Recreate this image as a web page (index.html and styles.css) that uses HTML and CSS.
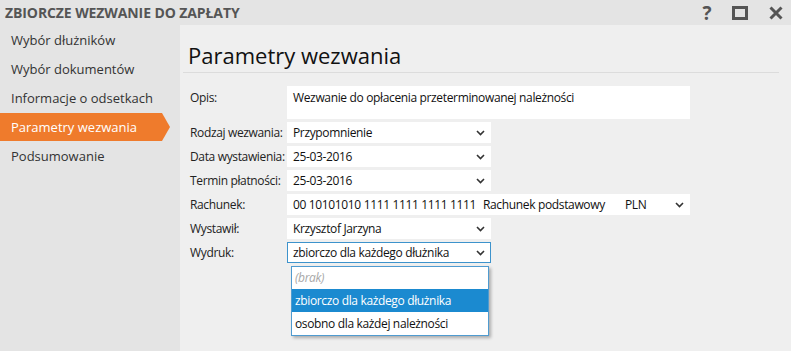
FILE: index.html
```html
<!DOCTYPE html>
<html lang="pl">
<head>
<meta charset="utf-8">
<title>Zbiorcze wezwanie do zapłaty</title>
<link rel="stylesheet" href="styles.css">
</head>
<body>
<div class="window">
  <header class="titlebar">
    <div class="title">ZBIORCZE WEZWANIE DO ZAPŁATY</div>
    <div class="controls">
      <span class="ctl help">?</span>
      <span class="ctl">
        <svg width="16" height="14" viewBox="0 0 16 14"><rect x="1.5" y="1.5" width="13" height="11" fill="none" stroke="#555" stroke-width="3"/></svg>
      </span>
      <span class="ctl">
        <svg width="14" height="14" viewBox="0 0 14 14"><path d="M1.5 1.5 L12.5 12.5 M12.5 1.5 L1.5 12.5" stroke="#555" stroke-width="3"/></svg>
      </span>
    </div>
  </header>
  <div class="main">
    <nav class="sidebar">
      <div class="nav-item">Wybór dłużników</div>
      <div class="nav-item">Wybór dokumentów</div>
      <div class="nav-item">Informacje o odsetkach</div>
      <div class="nav-item active">Parametry wezwania</div>
      <div class="nav-item">Podsumowanie</div>
    </nav>
    <section class="content">
      <h1 class="heading">Parametry wezwania</h1>
      <div class="form">
        <div class="label label-top">Opis:</div>
        <div class="field textarea wide">Wezwanie do opłacenia przeterminowanej należności</div>

        <div class="label">Rodzaj wezwania:</div>
        <div class="field select"><span>Przypomnienie</span><svg class="chev" width="9" height="6" viewBox="0 0 9 6"><path d="M1 1 L4.5 4.5 L8 1" fill="none" stroke="#333" stroke-width="1.6"/></svg></div>

        <div class="label">Data wystawienia:</div>
        <div class="field select"><span>25-03-2016</span><svg class="chev" width="9" height="6" viewBox="0 0 9 6"><path d="M1 1 L4.5 4.5 L8 1" fill="none" stroke="#333" stroke-width="1.6"/></svg></div>

        <div class="label">Termin płatności:</div>
        <div class="field select"><span>25-03-2016</span><svg class="chev" width="9" height="6" viewBox="0 0 9 6"><path d="M1 1 L4.5 4.5 L8 1" fill="none" stroke="#333" stroke-width="1.6"/></svg></div>

        <div class="label">Rachunek:</div>
        <div class="field account wide">
          <span class="acc-no">00 10101010 1111 1111 1111 1111</span>
          <span class="acc-name">Rachunek podstawowy</span>
          <span class="acc-cur">PLN</span>
          <svg class="chev" width="9" height="6" viewBox="0 0 9 6"><path d="M1 1 L4.5 4.5 L8 1" fill="none" stroke="#333" stroke-width="1.6"/></svg>
        </div>

        <div class="label">Wystawił:</div>
        <div class="field select"><span>Krzysztof Jarzyna</span><svg class="chev" width="9" height="6" viewBox="0 0 9 6"><path d="M1 1 L4.5 4.5 L8 1" fill="none" stroke="#333" stroke-width="1.6"/></svg></div>

        <div class="label">Wydruk:</div>
        <div class="field select focused"><span>zbiorczo dla każdego dłużnika</span><svg class="chev" width="9" height="6" viewBox="0 0 9 6"><path d="M1 1 L4.5 4.5 L8 1" fill="none" stroke="#333" stroke-width="1.6"/></svg>
          <ul class="dropdown">
            <li class="opt empty">(brak)</li>
            <li class="opt selected">zbiorczo dla każdego dłużnika</li>
            <li class="opt">osobno dla każdej należności</li>
          </ul>
        </div>
      </div>
    </section>
  </div>
</div>
</body>
</html>
```

FILE: styles.css
```css
* { box-sizing: border-box; }
html, body {
  margin: 0;
  padding: 0;
}
body {
  width: 791px;
  height: 351px;
  overflow: hidden;
  background: #efefef;
  font-family: "Open Sans", "Noto Sans", "DejaVu Sans", sans-serif;
  color: #222;
}
.window {
  width: 791px;
  height: 351px;
  display: flex;
  flex-direction: column;
}
.titlebar {
  height: 25px;
  background: #e4e4e4;
  display: flex;
  align-items: center;
  justify-content: space-between;
  padding-left: 5px;
}
.title {
  font-weight: 700;
  font-size: 14px;
  color: #555;
  letter-spacing: -0.1px;
}
.controls {
  display: flex;
  align-items: center;
  height: 25px;
}
.ctl {
  display: flex;
  align-items: center;
  justify-content: center;
}
.help {
  font-size: 19px;
  font-weight: 700;
  color: #555;
  width: 14px;
  margin-right: 18px;
  line-height: 20px;
}
.ctl svg { display: block; }
.ctl:nth-child(2) { margin-right: 21px; }
.ctl:nth-child(3) { margin-right: 8px; }

.main {
  flex: 1;
  display: flex;
}
.sidebar {
  width: 180px;
  background: #e4e4e4;
  padding-top: 1px;
}
.nav-item {
  position: relative;
  height: 29px;
  line-height: 29px;
  padding-left: 11px;
  font-size: 13px;
  color: #333;
  white-space: nowrap;
}
.nav-item.active {
  background: #ef7b2c;
  color: #fff;
  width: 162px;
  height: 28px;
  line-height: 28px;
  margin-bottom: 1px;
}
.nav-item.active::after {
  content: "";
  position: absolute;
  right: -8px;
  top: 0;
  border-top: 14px solid transparent;
  border-bottom: 14px solid transparent;
  border-left: 8px solid #ef7b2c;
}
.content {
  flex: 1;
  background: #efefef;
  padding-left: 3px;
  padding-right: 12px;
}
.heading {
  margin: 0;
  font-weight: 400;
  font-size: 22px;
  line-height: 32px;
  padding-top: 14px;
  padding-left: 5px;
  color: #111;
  border-bottom: 1px solid #dcdcdc;
  height: 48px;
}
.form {
  margin-top: 13px;
  padding-left: 7px;
  display: grid;
  grid-template-columns: 97px 204px;
  row-gap: 3px;
  font-size: 12px;
  letter-spacing: -0.35px;
}
.label {
  height: 21px;
  line-height: 21px;
  color: #222;
  white-space: nowrap;
}
.label-top {
  height: auto;
  line-height: 24px;
}
.field {
  position: relative;
  height: 21px;
  background: #fff;
  display: flex;
  align-items: center;
  padding-left: 6px;
  padding-right: 6px;
  color: #111;
  white-space: nowrap;
}
.field.wide { width: 403px; }
.textarea {
  height: 33px;
  align-items: flex-start;
  line-height: 24px;
}
.select span { flex: 1; }
.chev { display: block; flex: none; }
.focused {
  border: 1px solid #3d93cc;
  padding-left: 5px;
  padding-right: 5px;
}
.acc-no { width: 190px; }
.acc-name { width: 142px; }
.acc-cur { flex: 1; }
.dropdown {
  position: absolute;
  left: 3px;
  top: 23px;
  width: 198px;
  margin: 0;
  padding: 0;
  list-style: none;
  background: #fff;
  border: 1px solid #4f9bd0;
  box-shadow: 2px 2px 3px rgba(0,0,0,0.28);
  z-index: 5;
}
.opt {
  height: 23px;
  line-height: 23px;
  padding-left: 3px;
  color: #111;
}
.opt.empty {
  color: #a8a8a8;
  font-style: italic;
  height: 22px;
  line-height: 22px;
}
.opt.selected {
  background: #1b8ad0;
  color: #fff;
}
```
